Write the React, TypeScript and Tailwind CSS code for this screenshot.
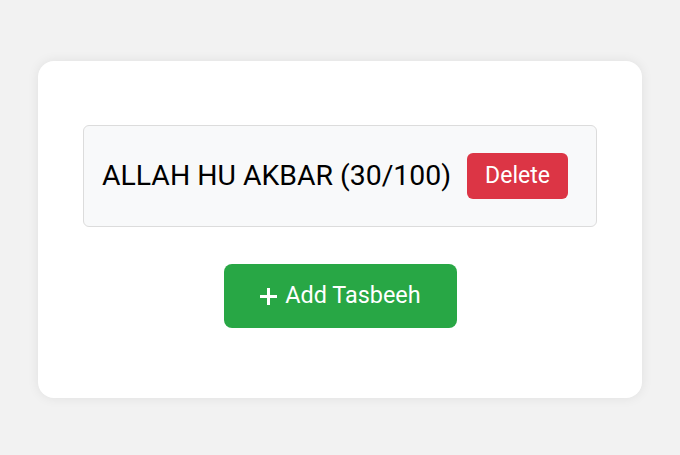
import React from 'react';

const items = [{ name: 'ALLAH HU AKBAR', count: 30, target: 100 }];

export default function App() {
  return (
    <div
      className="min-h-screen w-full bg-[#f2f2f2] flex items-center justify-center"
      style={{ fontFamily: 'Roboto, "Liberation Sans", sans-serif' }}
    >
      <div className="mt-[4px] w-[604px] h-[337px] bg-white rounded-[16px] shadow-[0_0_12px_rgba(0,0,0,0.08)] pt-[64px] px-[45px] flex flex-col items-center">
        {items.map((t) => (
          <div
            key={t.name}
            className="w-full h-[102px] bg-[#f8f9fa] border border-[#dcdcdc] rounded-[6px] flex items-center pl-[18px] pr-[28px] justify-between"
          >
            <span className="text-[28.4px] text-black leading-none">
              {t.name} ({t.count}/{t.target})
            </span>
            <button className="w-[101px] h-[46px] bg-[#dc3545] text-white text-[23px] rounded-[6px] flex items-center justify-center">
              Delete
            </button>
          </div>
        ))}

        <button className="mt-[37px] w-[233px] h-[64px] bg-[#28a745] text-white text-[23.4px] rounded-[8px] flex items-center justify-center gap-[7px]">
          <svg width="19" height="19" viewBox="0 0 19 19" fill="none">
            <path d="M9.5 1v17M1 9.5h17" stroke="white" strokeWidth="3" />
          </svg>
          <span>Add Tasbeeh</span>
        </button>
      </div>
    </div>
  );
}
